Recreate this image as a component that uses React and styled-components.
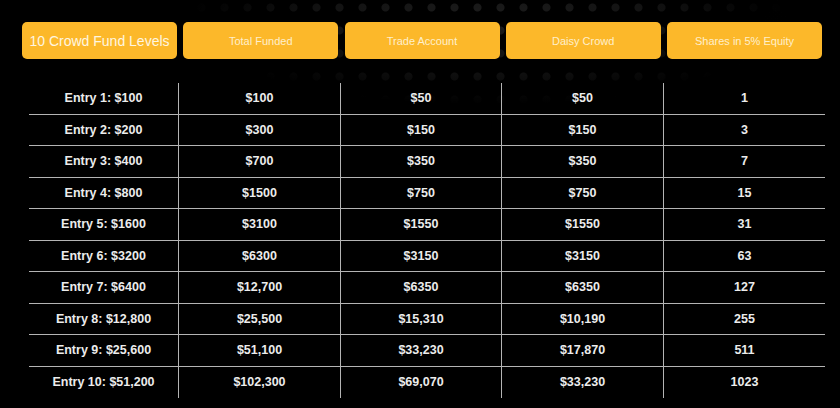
import React from "react";
import styled, { createGlobalStyle } from "styled-components";

const GlobalStyle = createGlobalStyle`
  html, body {
    margin: 0;
    padding: 0;
    background: #000;
  }
  body {
    font-family: "Liberation Sans", Arial, sans-serif;
  }
`;

const headers = [
  "10 Crowd Fund Levels",
  "Total Funded",
  "Trade Account",
  "Daisy Crowd",
  "Shares in 5% Equity",
];

const rows = [
  ["Entry 1: $100", "$100", "$50", "$50", "1"],
  ["Entry 2: $200", "$300", "$150", "$150", "3"],
  ["Entry 3: $400", "$700", "$350", "$350", "7"],
  ["Entry 4: $800", "$1500", "$750", "$750", "15"],
  ["Entry 5: $1600", "$3100", "$1550", "$1550", "31"],
  ["Entry 6: $3200", "$6300", "$3150", "$3150", "63"],
  ["Entry 7: $6400", "$12,700", "$6350", "$6350", "127"],
  ["Entry 8: $12,800", "$25,500", "$15,310", "$10,190", "255"],
  ["Entry 9: $25,600", "$51,100", "$33,230", "$17,870", "511"],
  ["Entry 10: $51,200", "$102,300", "$69,070", "$33,230", "1023"],
];

const App = () => {
  return (
    <Page>
      <GlobalStyle />
      <HeaderRow>
        {headers.map((h, i) => (
          <HeaderButton key={h} big={i === 0}>
            {h}
          </HeaderButton>
        ))}
      </HeaderRow>
      <Table>
        {rows.map((row, r) => (
          <Row key={row[0]} last={r === rows.length - 1}>
            {row.map((cell, c) => (
              <Cell key={c} divider={c > 0}>
                {cell}
              </Cell>
            ))}
          </Row>
        ))}
      </Table>
    </Page>
  );
};

export default App;

// background: faint dot field fading out from the top centre,
// a soft diagonal sweep on the right and a dark chevron on the left edge
const Page = styled.div`
  width: 840px;
  height: 408px;
  overflow: hidden;
  box-sizing: border-box;
  padding: 22px 18px 0 22px;
  background-color: #000;
  background-image: radial-gradient(
      ellipse 300px 85px at 58% 20px,
      rgba(0, 0, 0, 0) 0%,
      rgba(0, 0, 0, 0.35) 55%,
      #000 100%
    ),
    radial-gradient(circle, #1c1c1c 3.5px, rgba(0, 0, 0, 0) 4.5px),
    linear-gradient(120deg, rgba(0, 0, 0, 0) 72%, #0a0a0a 78%, rgba(0, 0, 0, 0) 84%),
    linear-gradient(135deg, #101113 50%, rgba(0, 0, 0, 0) 50%),
    linear-gradient(45deg, rgba(0, 0, 0, 0) 50%, #101113 50%);
  background-size: 100% 100%, 23px 23px, 100% 100%, 16px 40px, 16px 40px;
  background-position: 0 0, 6px -4px, 0 0, -8px 302px, -8px 342px;
  background-repeat: no-repeat, repeat, no-repeat, no-repeat, no-repeat;
`;

const HeaderRow = styled.div`
  display: grid;
  grid-template-columns: repeat(5, 155px);
  column-gap: 6.25px;
`;

const HeaderButton = styled.div`
  height: 37px;
  display: flex;
  align-items: center;
  justify-content: center;
  background: #fcb82a;
  border-radius: 5px;
  color: ${(p) => (p.big ? "#fff6e0" : "rgba(255, 248, 228, 0.88)")};
  font-size: ${(p) => (p.big ? "14px" : "11px")};
  white-space: nowrap;
`;

const Table = styled.div`
  margin-top: 24px;
  margin-left: 7px;
  width: 796px;
  display: flex;
  flex-direction: column;
`;

const Row = styled.div`
  display: grid;
  grid-template-columns: 149px 162px 161px 162px 162px;
  height: 31.5px;
  border-bottom: ${(p) => (p.last ? "none" : "1.5px solid #b4b4b4")};
  box-sizing: border-box;
`;

const Cell = styled.div`
  display: flex;
  align-items: center;
  justify-content: center;
  color: #ececec;
  font-weight: bold;
  font-size: 12.5px;
  border-left: ${(p) => (p.divider ? "1.5px solid #b4b4b4" : "none")};
  white-space: nowrap;
`;
